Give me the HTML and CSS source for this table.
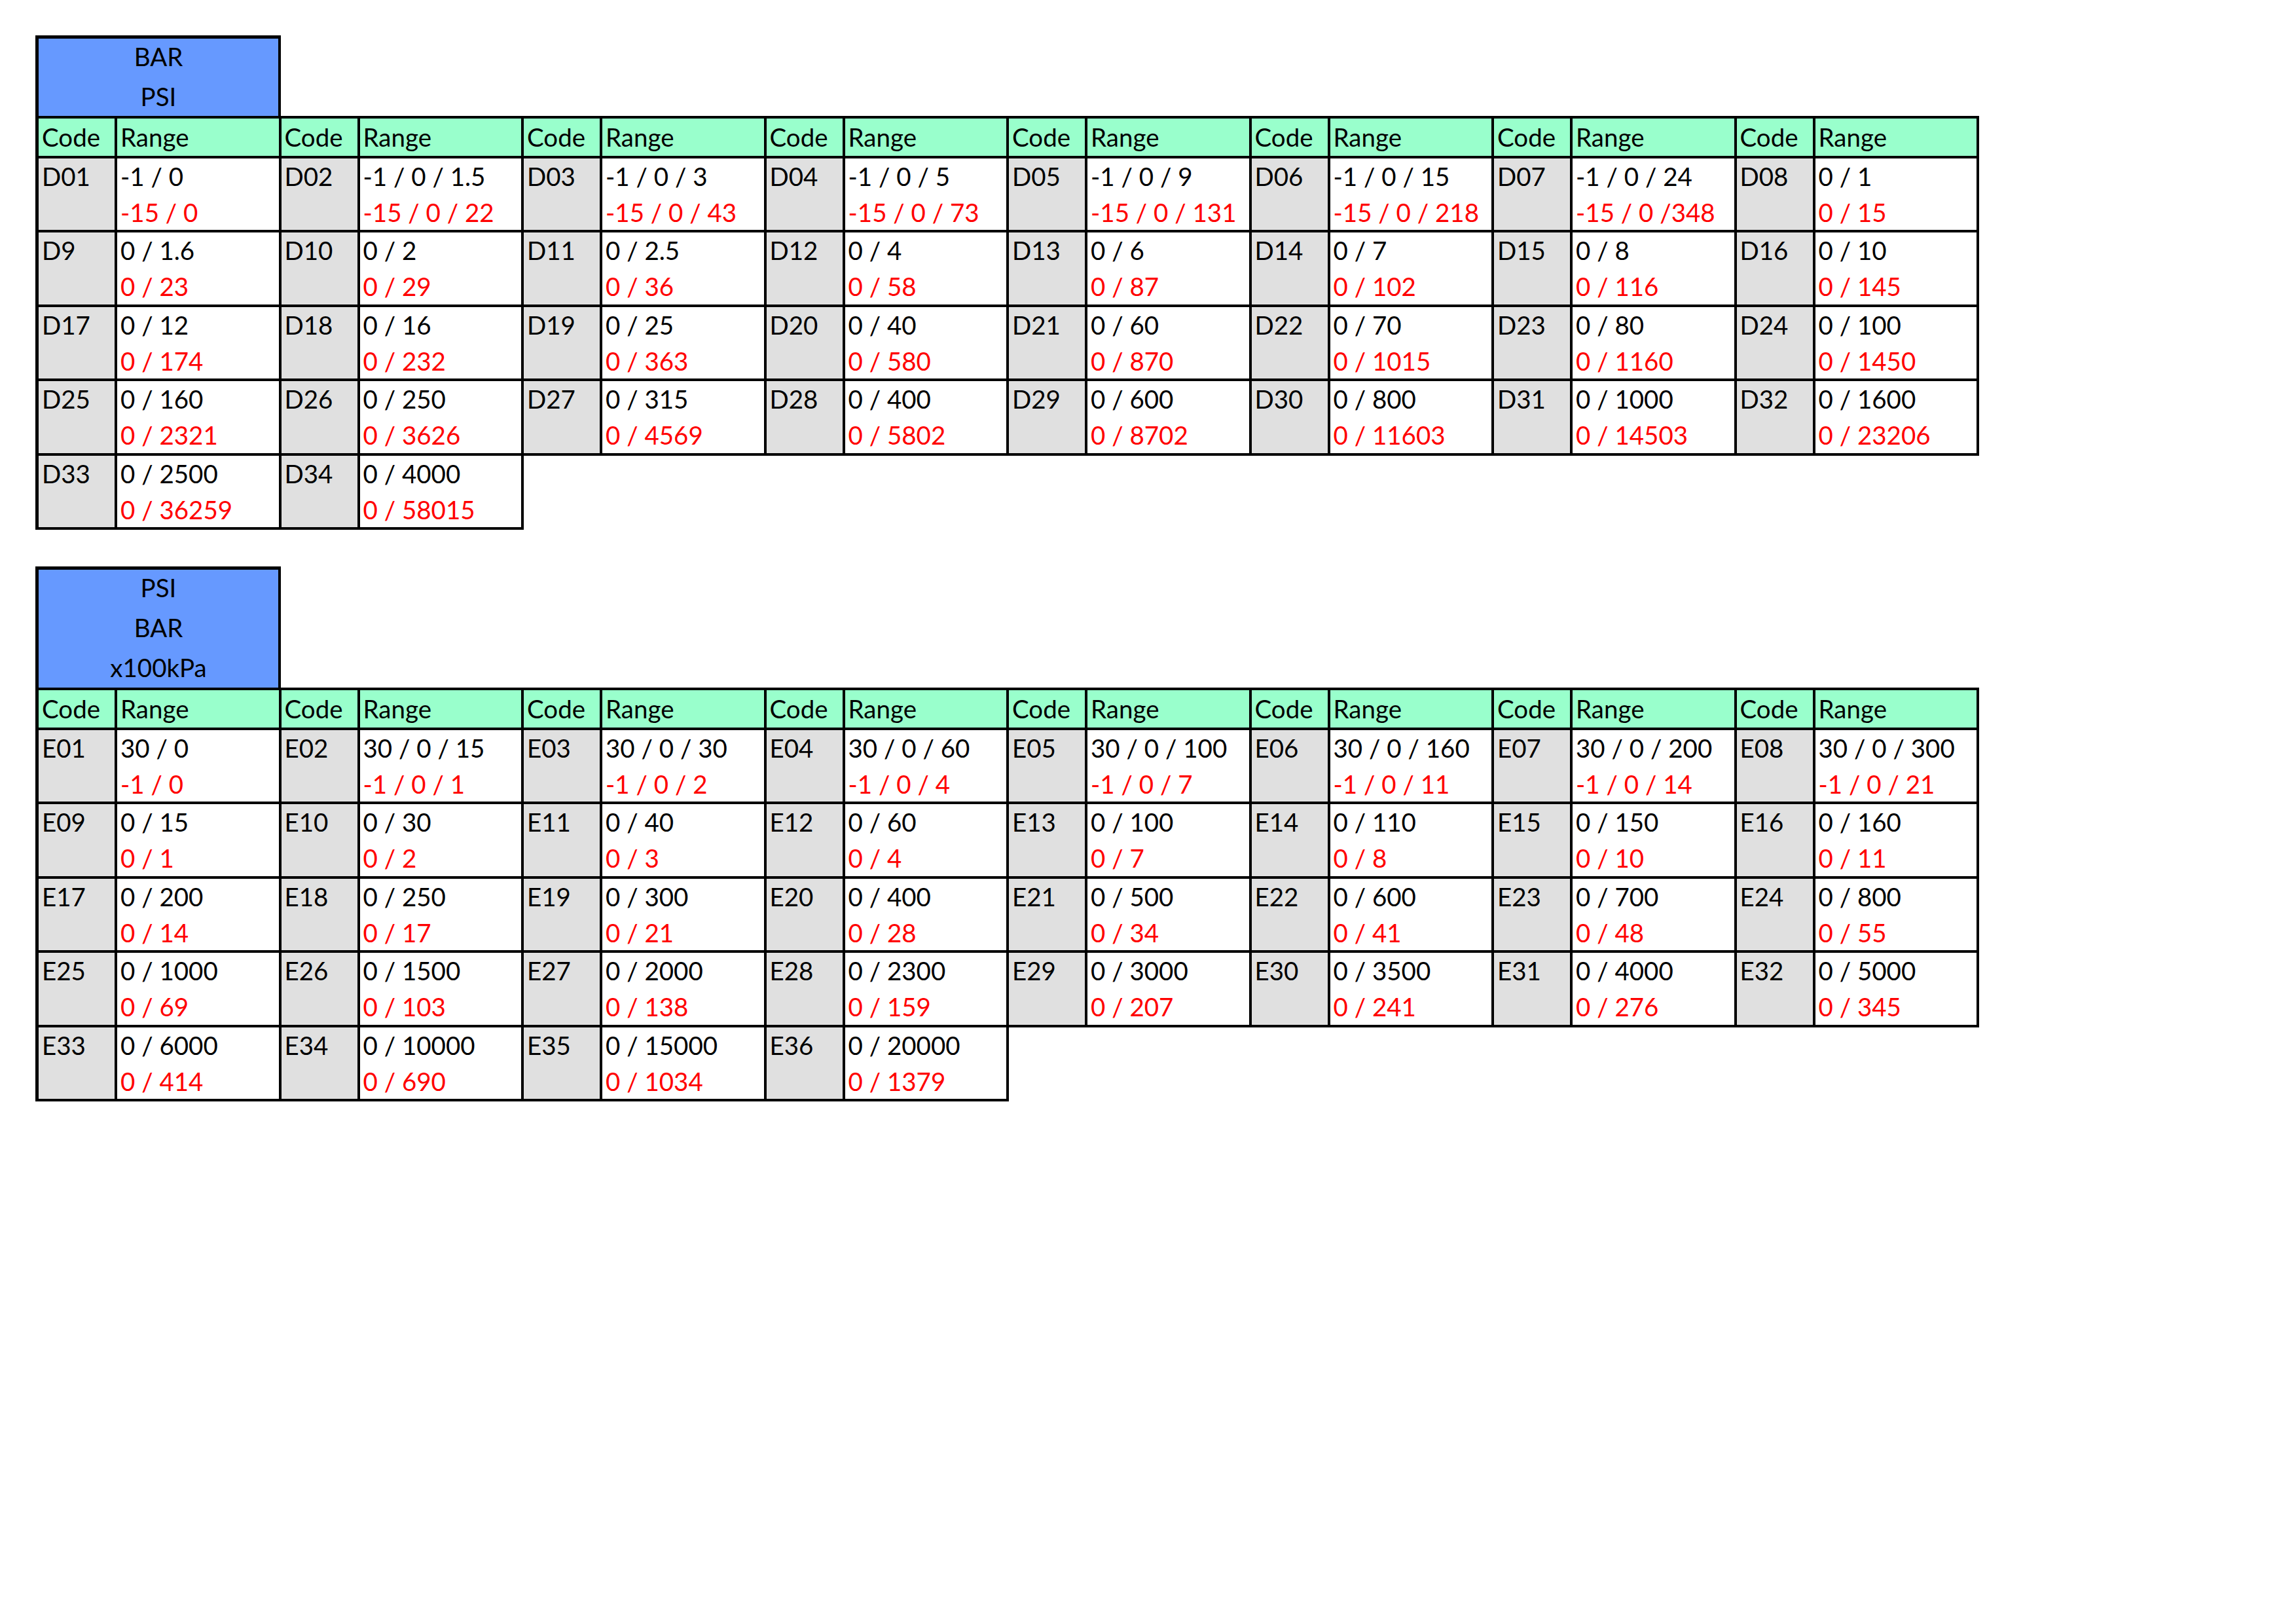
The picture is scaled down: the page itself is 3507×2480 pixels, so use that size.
FILE: index.html
```html
<!DOCTYPE html>
<html lang="en">
<head>
<meta charset="utf-8">
<title>Pressure range codes</title>
<link rel="stylesheet" href="styles.css">
</head>
<body>
<main class="sheet">
  <section class="block">
    <div class="unit unit-2">
      <div class="unit-text"><div>BAR</div><div>PSI</div></div>
    </div>
    <div class="grid">
      <div class="hd">Code</div><div class="hd">Range</div>
      <div class="hd">Code</div><div class="hd">Range</div>
      <div class="hd">Code</div><div class="hd">Range</div>
      <div class="hd">Code</div><div class="hd">Range</div>
      <div class="hd">Code</div><div class="hd">Range</div>
      <div class="hd">Code</div><div class="hd">Range</div>
      <div class="hd">Code</div><div class="hd">Range</div>
      <div class="hd">Code</div><div class="hd">Range</div>

      <div class="code">D01</div><div class="range"><div>-1 / 0</div><div class="alt">-15 / 0</div></div>
      <div class="code">D02</div><div class="range"><div>-1 / 0 / 1.5</div><div class="alt">-15 / 0 / 22</div></div>
      <div class="code">D03</div><div class="range"><div>-1 / 0 / 3</div><div class="alt">-15 / 0 / 43</div></div>
      <div class="code">D04</div><div class="range"><div>-1 / 0 / 5</div><div class="alt">-15 / 0 / 73</div></div>
      <div class="code">D05</div><div class="range"><div>-1 / 0 / 9</div><div class="alt">-15 / 0 / 131</div></div>
      <div class="code">D06</div><div class="range"><div>-1 / 0 / 15</div><div class="alt">-15 / 0 / 218</div></div>
      <div class="code">D07</div><div class="range"><div>-1 / 0 / 24</div><div class="alt">-15 / 0 /348</div></div>
      <div class="code">D08</div><div class="range"><div>0 / 1</div><div class="alt">0 / 15</div></div>

      <div class="code">D9</div><div class="range"><div>0 / 1.6</div><div class="alt">0 / 23</div></div>
      <div class="code">D10</div><div class="range"><div>0 / 2</div><div class="alt">0 / 29</div></div>
      <div class="code">D11</div><div class="range"><div>0 / 2.5</div><div class="alt">0 / 36</div></div>
      <div class="code">D12</div><div class="range"><div>0 / 4</div><div class="alt">0 / 58</div></div>
      <div class="code">D13</div><div class="range"><div>0 / 6</div><div class="alt">0 / 87</div></div>
      <div class="code">D14</div><div class="range"><div>0 / 7</div><div class="alt">0 / 102</div></div>
      <div class="code">D15</div><div class="range"><div>0 / 8</div><div class="alt">0 / 116</div></div>
      <div class="code">D16</div><div class="range"><div>0 / 10</div><div class="alt">0 / 145</div></div>

      <div class="code">D17</div><div class="range"><div>0 / 12</div><div class="alt">0 / 174</div></div>
      <div class="code">D18</div><div class="range"><div>0 / 16</div><div class="alt">0 / 232</div></div>
      <div class="code">D19</div><div class="range"><div>0 / 25</div><div class="alt">0 / 363</div></div>
      <div class="code">D20</div><div class="range"><div>0 / 40</div><div class="alt">0 / 580</div></div>
      <div class="code">D21</div><div class="range"><div>0 / 60</div><div class="alt">0 / 870</div></div>
      <div class="code">D22</div><div class="range"><div>0 / 70</div><div class="alt">0 / 1015</div></div>
      <div class="code">D23</div><div class="range"><div>0 / 80</div><div class="alt">0 / 1160</div></div>
      <div class="code">D24</div><div class="range"><div>0 / 100</div><div class="alt">0 / 1450</div></div>

      <div class="code">D25</div><div class="range"><div>0 / 160</div><div class="alt">0 / 2321</div></div>
      <div class="code">D26</div><div class="range"><div>0 / 250</div><div class="alt">0 / 3626</div></div>
      <div class="code">D27</div><div class="range"><div>0 / 315</div><div class="alt">0 / 4569</div></div>
      <div class="code">D28</div><div class="range"><div>0 / 400</div><div class="alt">0 / 5802</div></div>
      <div class="code">D29</div><div class="range"><div>0 / 600</div><div class="alt">0 / 8702</div></div>
      <div class="code">D30</div><div class="range"><div>0 / 800</div><div class="alt">0 / 11603</div></div>
      <div class="code">D31</div><div class="range"><div>0 / 1000</div><div class="alt">0 / 14503</div></div>
      <div class="code">D32</div><div class="range"><div>0 / 1600</div><div class="alt">0 / 23206</div></div>

      <div class="code">D33</div><div class="range"><div>0 / 2500</div><div class="alt">0 / 36259</div></div>
      <div class="code">D34</div><div class="range"><div>0 / 4000</div><div class="alt">0 / 58015</div></div>
    </div>
  </section>

  <section class="block">
    <div class="unit unit-3">
      <div class="unit-text"><div>PSI</div><div>BAR</div><div>x100kPa</div></div>
    </div>
    <div class="grid">
      <div class="hd">Code</div><div class="hd">Range</div>
      <div class="hd">Code</div><div class="hd">Range</div>
      <div class="hd">Code</div><div class="hd">Range</div>
      <div class="hd">Code</div><div class="hd">Range</div>
      <div class="hd">Code</div><div class="hd">Range</div>
      <div class="hd">Code</div><div class="hd">Range</div>
      <div class="hd">Code</div><div class="hd">Range</div>
      <div class="hd">Code</div><div class="hd">Range</div>

      <div class="code">E01</div><div class="range"><div>30 / 0</div><div class="alt">-1 / 0</div></div>
      <div class="code">E02</div><div class="range"><div>30 / 0 / 15</div><div class="alt">-1 / 0 / 1</div></div>
      <div class="code">E03</div><div class="range"><div>30 / 0 / 30</div><div class="alt">-1 / 0 / 2</div></div>
      <div class="code">E04</div><div class="range"><div>30 / 0 / 60</div><div class="alt">-1 / 0 / 4</div></div>
      <div class="code">E05</div><div class="range"><div>30 / 0 / 100</div><div class="alt">-1 / 0 / 7</div></div>
      <div class="code">E06</div><div class="range"><div>30 / 0 / 160</div><div class="alt">-1 / 0 / 11</div></div>
      <div class="code">E07</div><div class="range"><div>30 / 0 / 200</div><div class="alt">-1 / 0 / 14</div></div>
      <div class="code">E08</div><div class="range"><div>30 / 0 / 300</div><div class="alt">-1 / 0 / 21</div></div>

      <div class="code">E09</div><div class="range"><div>0 / 15</div><div class="alt">0 / 1</div></div>
      <div class="code">E10</div><div class="range"><div>0 / 30</div><div class="alt">0 / 2</div></div>
      <div class="code">E11</div><div class="range"><div>0 / 40</div><div class="alt">0 / 3</div></div>
      <div class="code">E12</div><div class="range"><div>0 / 60</div><div class="alt">0 / 4</div></div>
      <div class="code">E13</div><div class="range"><div>0 / 100</div><div class="alt">0 / 7</div></div>
      <div class="code">E14</div><div class="range"><div>0 / 110</div><div class="alt">0 / 8</div></div>
      <div class="code">E15</div><div class="range"><div>0 / 150</div><div class="alt">0 / 10</div></div>
      <div class="code">E16</div><div class="range"><div>0 / 160</div><div class="alt">0 / 11</div></div>

      <div class="code">E17</div><div class="range"><div>0 / 200</div><div class="alt">0 / 14</div></div>
      <div class="code">E18</div><div class="range"><div>0 / 250</div><div class="alt">0 / 17</div></div>
      <div class="code">E19</div><div class="range"><div>0 / 300</div><div class="alt">0 / 21</div></div>
      <div class="code">E20</div><div class="range"><div>0 / 400</div><div class="alt">0 / 28</div></div>
      <div class="code">E21</div><div class="range"><div>0 / 500</div><div class="alt">0 / 34</div></div>
      <div class="code">E22</div><div class="range"><div>0 / 600</div><div class="alt">0 / 41</div></div>
      <div class="code">E23</div><div class="range"><div>0 / 700</div><div class="alt">0 / 48</div></div>
      <div class="code">E24</div><div class="range"><div>0 / 800</div><div class="alt">0 / 55</div></div>

      <div class="code">E25</div><div class="range"><div>0 / 1000</div><div class="alt">0 / 69</div></div>
      <div class="code">E26</div><div class="range"><div>0 / 1500</div><div class="alt">0 / 103</div></div>
      <div class="code">E27</div><div class="range"><div>0 / 2000</div><div class="alt">0 / 138</div></div>
      <div class="code">E28</div><div class="range"><div>0 / 2300</div><div class="alt">0 / 159</div></div>
      <div class="code">E29</div><div class="range"><div>0 / 3000</div><div class="alt">0 / 207</div></div>
      <div class="code">E30</div><div class="range"><div>0 / 3500</div><div class="alt">0 / 241</div></div>
      <div class="code">E31</div><div class="range"><div>0 / 4000</div><div class="alt">0 / 276</div></div>
      <div class="code">E32</div><div class="range"><div>0 / 5000</div><div class="alt">0 / 345</div></div>

      <div class="code">E33</div><div class="range"><div>0 / 6000</div><div class="alt">0 / 414</div></div>
      <div class="code">E34</div><div class="range"><div>0 / 10000</div><div class="alt">0 / 690</div></div>
      <div class="code">E35</div><div class="range"><div>0 / 15000</div><div class="alt">0 / 1034</div></div>
      <div class="code">E36</div><div class="range"><div>0 / 20000</div><div class="alt">0 / 1379</div></div>
    </div>
  </section>
</main>
</body>
</html>
```

FILE: styles.css
```css
html, body {
  margin: 0;
  padding: 0;
  background: #ffffff;
}

body {
  font-family: Lato, "Liberation Sans", sans-serif;
  font-size: 38.5px;
  color: #000000;
}

.sheet {
  display: flex;
  flex-direction: column;
  align-items: flex-start;
  gap: 56px;
  padding: 54px 0 0 54px;
}

.block {
  display: flex;
  flex-direction: column;
  align-items: flex-start;
}

.unit {
  box-sizing: border-box;
  width: 375px;
  background: #6699ff;
  border-top: 5px solid #000;
  border-left: 5px solid #000;
  border-right: 4px solid #000;
  text-align: center;
  overflow: hidden;
}

.unit-2 {
  height: 123px;
}

.unit-3 {
  height: 185px;
}

.unit-text {
  line-height: 61px;
  margin-top: -3px;
}

.grid {
  display: grid;
  grid-template-columns: repeat(8, 120px 250.5px);
  grid-template-rows: 61px;
  grid-auto-rows: 113.4px;
  border-top: 4px solid #000;
  border-left: 5px solid #000;
}

.grid > div {
  box-sizing: border-box;
  border-right: 4px solid #000;
  border-bottom: 4px solid #000;
  padding-left: 5px;
  white-space: nowrap;
  overflow: hidden;
}

.hd {
  background: #99ffcc;
  line-height: 57px;
}

.code {
  background: #e0e0e0;
  line-height: 55px;
}

.range {
  background: #ffffff;
  line-height: 55px;
}

.alt {
  color: #ff0000;
}
```
